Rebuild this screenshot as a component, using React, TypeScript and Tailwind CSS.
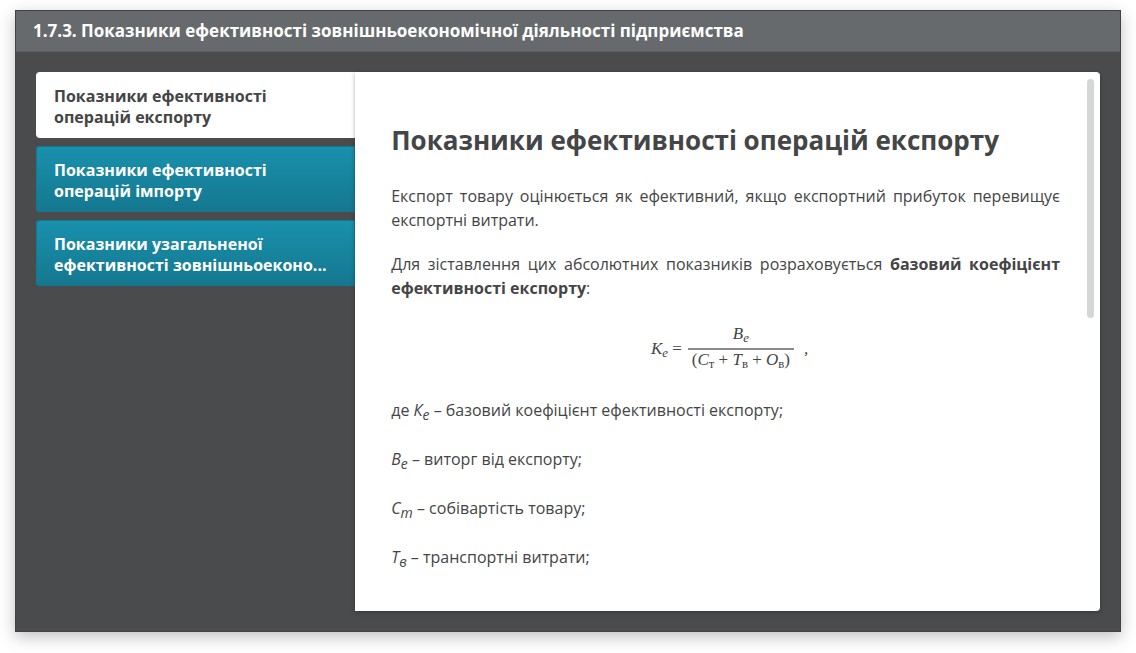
import { useState } from "react";

const tabs = [
  ["Показники ефективності", "операцій експорту"],
  ["Показники ефективності", "операцій імпорту"],
  ["Показники узагальненої", "ефективності зовнішньоеконо..."],
];

const terms = [
  { prefix: "де ", symbol: "К", index: "е", text: "базовий коефіцієнт ефективності експорту;" },
  { prefix: "", symbol: "В", index: "е", text: "виторг від експорту;" },
  { prefix: "", symbol: "С", index: "т", text: "собівартість товару;" },
  { prefix: "", symbol: "Т", index: "в", text: "транспортні витрати;" },
];

function Formula() {
  return (
    <div className="mt-6 flex items-center justify-center gap-1.5 pl-2 font-['Liberation_Serif',serif] text-[17px] leading-5 italic">
      <span>
        К<sub>е</sub> <span className="not-italic">=</span>
      </span>
      <span className="flex flex-col text-center">
        <span className="border-b-2 border-[#8b8b8b] pb-1">
          В<sub>е</sub>
        </span>
        <span className="px-1 pb-1">
          <span className="not-italic">(</span>С<sub className="not-italic">т</sub>
          <span className="not-italic"> + </span>Т<sub className="not-italic">в</sub>
          <span className="not-italic"> + </span>О<sub className="not-italic">в</sub>
          <span className="not-italic">)</span>
        </span>
      </span>
      <span className="pl-1">,</span>
    </div>
  );
}

export default function App() {
  const [active, setActive] = useState(0);
  return (
    <div className="flex min-h-screen flex-col bg-white px-[15px] pt-2.5 pb-[21px] font-['Open_Sans',sans-serif] text-[#444546]">
      <main className="flex flex-1 flex-col border border-[#404243] bg-[#4a4b4c] shadow-[0_5px_15px_rgba(0,0,0,0.25)]">
        <header className="border-b border-[#5d6061] bg-[#676a6c] px-[17px] py-2">
          <h1 className="text-[17px] leading-6 font-bold text-white">
            1.7.3. Показники ефективності зовнішньоекономічної діяльності підприємства
          </h1>
        </header>
        <div className="flex flex-1 p-5">
          <nav role="tablist" aria-label="Показники" className="flex w-[30%] shrink-0 flex-col gap-2">
            {tabs.map((lines, i) => (
              <button
                key={i}
                type="button"
                role="tab"
                aria-selected={active === i}
                onClick={() => setActive(i)}
                className={
                  "rounded-l-[4px] px-[18px] pt-3.5 pb-2.5 text-left text-base leading-[21px] font-bold whitespace-nowrap " +
                  (active === i
                    ? "bg-white text-[#444546]"
                    : "bg-linear-to-b from-[#1991ad] to-[#15778f] text-white shadow-[inset_0_0_0_1px_#14798f]")
                }
              >
                {lines[0]}
                <br />
                {lines[1]}
              </button>
            ))}
          </nav>
          <section role="tabpanel" className="relative flex-1 rounded-r-[4px] bg-white pt-12 pr-10 pb-8 pl-9 shadow-[0_1px_4px_rgba(0,0,0,0.3)]">
            <h2 className="text-[26px] leading-10 font-bold">Показники ефективності операцій експорту</h2>
            <p className="mt-6 text-justify text-base leading-6">
              Експорт товару оцінюється як ефективний, якщо експортний прибуток перевищує експортні витрати.
            </p>
            <p className="mt-5 text-justify text-base leading-6">
              Для зіставлення цих абсолютних показників розраховується <strong>базовий коефіцієнт ефективності експорту</strong>:
            </p>
            <Formula />
            <div className="mt-[22px] flex flex-col gap-5 text-base leading-[29px]">
              {terms.map((t) => (
                <p key={t.symbol}>
                  {t.prefix}
                  <i>
                    {t.symbol}
                    <sub className="text-sm">{t.index}</sub>
                  </i>{" "}
                  – {t.text}
                </p>
              ))}
            </div>
            <div className="absolute top-[7px] right-1.5 h-[239px] w-[7px] rounded-full bg-[#d6d6d6]" />
          </section>
        </div>
      </main>
    </div>
  );
}
